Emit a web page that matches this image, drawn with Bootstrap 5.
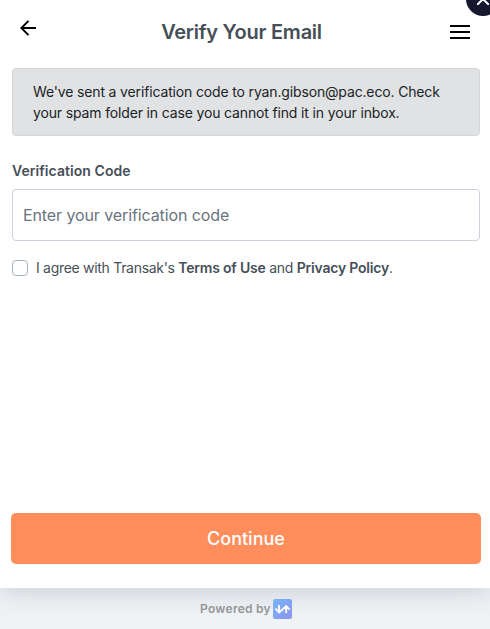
<!DOCTYPE html>
<html lang="en">
<head>
<meta charset="utf-8">
<meta name="viewport" content="width=device-width, initial-scale=1">
<title>Verify Your Email</title>
<link href="https://cdn.jsdelivr.net/npm/bootstrap@5.3.0/dist/css/bootstrap.min.css" rel="stylesheet">
<style>
body{font-family:Inter,"Open Sans",sans-serif;background:#eff3f6;height:629px;overflow:hidden;color:#464f58;font-size:14px}
.panel{height:588px;box-shadow:0 2px 26px rgba(50,60,75,.22);padding:0 10px 24px 12px}
.topbar{height:68px;padding:0 10px 5px 8px}
.title{font-size:20px;font-weight:600;letter-spacing:-.25px;line-height:24px;color:#464f58;padding-right:3px}
.notice{height:68px;padding:12px 20px;background:#e1e2e4;border:1px solid #d5d6d9;border-radius:4px;color:#202326;line-height:21px;letter-spacing:-.15px}
.code-label{font-weight:600;line-height:20px;margin:25px 0 8px;letter-spacing:.06px}
.code-input{height:52px;border:1px solid #cbd0dc;border-radius:4px;padding:0 10px;font-size:16px;letter-spacing:-.1px}
.code-input::placeholder{color:#697580}
.agree{margin-top:17px;line-height:20px;letter-spacing:-.3px}
.agree .form-check-input{width:16px;height:16px;border:1px solid #a9b4c3;border-radius:4px}
.agree b{font-weight:600;letter-spacing:-.2px}
.go{height:51px;margin:0 -1px;background:#ff8e5c;border:0;border-radius:5px;color:#fff;font-size:18px;font-weight:500}
.powered{height:41px;color:#949698;font-size:12px;font-weight:600;letter-spacing:.27px;gap:2px;padding-left:2px}
.close-dot{top:-18px;right:-10px;width:34px;height:34px;background:#17172d}
</style>
<script src="https://cdn.jsdelivr.net/npm/bootstrap@5.3.0/dist/js/bootstrap.bundle.min.js"></script>
</head>
<body class="position-relative">
<main class="panel bg-white d-flex flex-column">
  <header class="topbar d-flex align-items-center justify-content-between">
    <svg width="16" height="24" viewBox="0 0 16 24" fill="none" stroke="#000" stroke-width="2"><path d="M16 8H1.5M8.5 .9L1.4 8l7.1 7.1"/></svg>
    <h1 class="title m-0">Verify Your Email</h1>
    <svg width="20" height="14" viewBox="0 0 20 14" fill="#000"><path d="M0 0h20v2H0zM0 6h20v2H0zM0 12h20v2H0z"/></svg>
  </header>
  <div class="notice">We've sent a verification code to ryan.gibson@pac.eco. Check<br>your spam folder in case you cannot find it in your inbox.</div>
  <label class="code-label" for="code">Verification Code</label>
  <input class="form-control code-input" id="code" placeholder="Enter your verification code">
  <div class="agree d-flex align-items-center gap-2">
    <input class="form-check-input m-0" type="checkbox" id="terms">
    <label for="terms">I agree with Transak's <b>Terms of Use</b> and <b>Privacy Policy</b>.</label>
  </div>
  <button class="btn go mt-auto">Continue</button>
</main>
<footer class="powered d-flex align-items-center justify-content-center">
  <span>Powered by</span>
  <svg width="19" height="20" viewBox="0 0 19 20" fill="none"><defs><linearGradient id="g" x1="0" y1="0" x2="1" y2="1"><stop stop-color="#76b5f8"/><stop offset="1" stop-color="#8e94ee"/></linearGradient></defs><rect width="19" height="20" rx="2" fill="url(#g)"/><path d="M6 6v7.5M2.5 9.7l3.6 3.8 7.1-6.5 3.4 3.6M13.2 7v7" stroke="#fff" stroke-width="1.8"/></svg>
</footer>
<div class="close-dot position-absolute rounded-circle d-flex justify-content-center align-items-center">
  <svg width="12" height="12" viewBox="0 0 12 12" stroke="#fff" stroke-width="2"><path d="M0 0l12 12M12 0L0 12"/></svg>
</div>
</body>
</html>
